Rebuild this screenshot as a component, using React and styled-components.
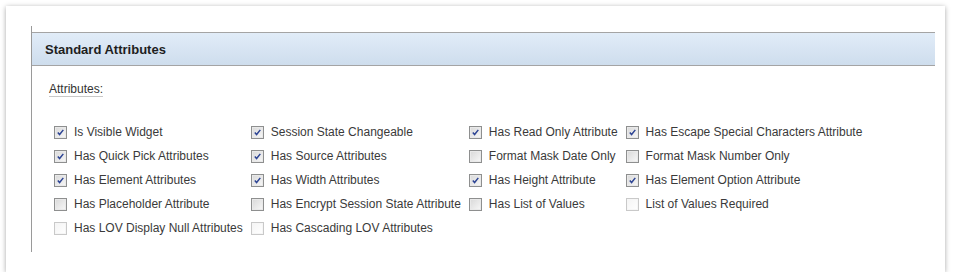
import styled, { createGlobalStyle } from "styled-components";

const GlobalStyle = createGlobalStyle`
  body {
    margin: 0;
    background: #ffffff;
    font-family: Arial, "Liberation Sans", sans-serif;
  }
`;

const attributes = [
  [
    { label: "Is Visible Widget", state: "checked" },
    { label: "Session State Changeable", state: "checked" },
    { label: "Has Read Only Attribute", state: "checked" },
    { label: "Has Escape Special Characters Attribute", state: "checked" },
  ],
  [
    { label: "Has Quick Pick Attributes", state: "checked" },
    { label: "Has Source Attributes", state: "checked" },
    { label: "Format Mask Date Only", state: "off" },
    { label: "Format Mask Number Only", state: "off" },
  ],
  [
    { label: "Has Element Attributes", state: "checked" },
    { label: "Has Width Attributes", state: "checked" },
    { label: "Has Height Attribute", state: "checked" },
    { label: "Has Element Option Attribute", state: "checked" },
  ],
  [
    { label: "Has Placeholder Attribute", state: "off" },
    { label: "Has Encrypt Session State Attribute", state: "off" },
    { label: "Has List of Values", state: "off" },
    { label: "List of Values Required", state: "disabled" },
  ],
  [
    { label: "Has LOV Display Null Attributes", state: "disabled" },
    { label: "Has Cascading LOV Attributes", state: "disabled" },
  ],
];

const Card = styled.div`
  margin: 6px 0 0 6px;
  width: 939px;
  height: 266px;
  box-sizing: border-box;
  background: #fff;
  box-shadow: 0 1px 5px rgba(0, 0, 0, 0.35);
  padding: 20px 10px 20px 25px;
`;

const Region = styled.div`
  height: 226px;
  box-sizing: border-box;
  border-left: 1px solid #9a9a9a;
  padding-top: 6px;
`;

const Header = styled.div`
  height: 34px;
  box-sizing: border-box;
  display: flex;
  align-items: center;
  padding-left: 13px;
  border-top: 1px solid #a4a4a4;
  border-bottom: 1px solid #a4a4a4;
  background: linear-gradient(#e1ecf8, #cedded);
`;

const Title = styled.h2`
  margin: 0;
  font-size: 13px;
  font-weight: bold;
  color: #1e1e1e;
`;

const Body = styled.div`
  padding: 13px 0 0 17px;
`;

const FieldLabel = styled.span`
  display: inline-block;
  font-size: 12px;
  line-height: 14px;
  color: #333;
  border-bottom: 1px solid #c8c8c8;
`;

const Grid = styled.div`
  margin-top: 23px;
  margin-left: 5px;
  display: grid;
  grid-template-columns: repeat(4, max-content);
  grid-auto-rows: 24px;
  column-gap: 8px;
`;

const Option = styled.label`
  display: flex;
  align-items: center;
  gap: 7px;
  font-size: 12px;
  color: #3a3a3a;
  white-space: nowrap;
`;

const Box = styled.span`
  width: 13px;
  height: 13px;
  box-sizing: border-box;
  flex: none;
  display: flex;
  align-items: center;
  justify-content: center;
  border: 1px solid ${(p) => (p.$state === "disabled" ? "#c9c9c9" : "#8e8f8f")};
  background: ${(p) =>
    p.$state === "disabled"
      ? "linear-gradient(135deg, #f4f4f4, #ffffff)"
      : "linear-gradient(135deg, #d8d8d8, #f8f8f8)"};
  box-shadow: inset 0 0 0 1px
    ${(p) => (p.$state === "disabled" ? "#f6f6f6" : "#e9e9e9")};
`;

function Check() {
  return (
    <svg width="9" height="9" viewBox="0 0 9 9">
      <path
        d="M1.8 4.4 L3.6 6.5 L7.3 1.9"
        fill="none"
        stroke="#2d4494"
        strokeWidth="1.5"
      />
    </svg>
  );
}

export default function App() {
  return (
    <>
      <GlobalStyle />
      <Card>
        <Region>
          <Header>
            <Title>Standard Attributes</Title>
          </Header>
          <Body>
            <FieldLabel>Attributes:</FieldLabel>
            <Grid>
              {attributes.flat().map((item, i) => (
                <Option key={i}>
                  <Box $state={item.state}>
                    {item.state === "checked" ? <Check /> : null}
                  </Box>
                  {item.label}
                </Option>
              ))}
            </Grid>
          </Body>
        </Region>
      </Card>
    </>
  );
}
